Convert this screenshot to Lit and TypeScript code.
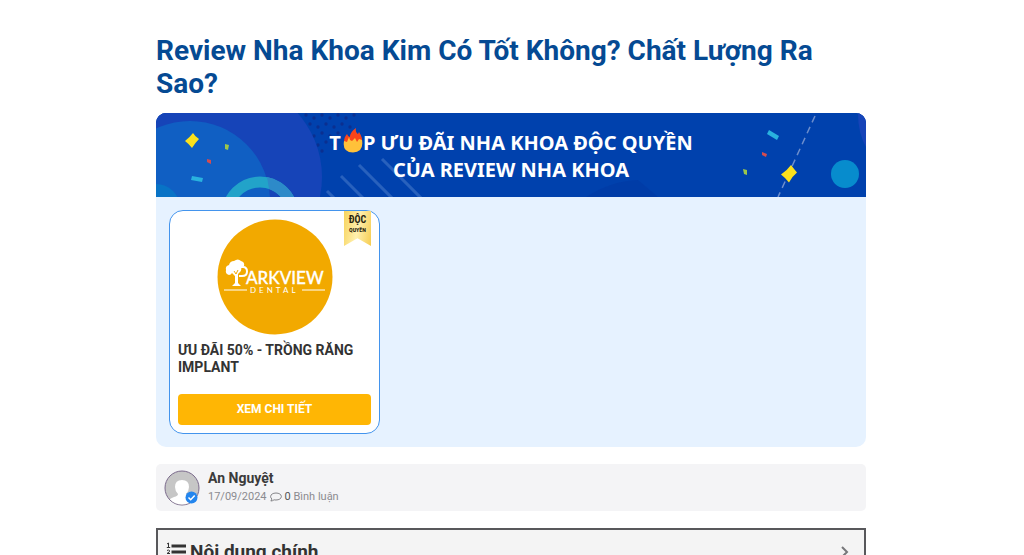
import { LitElement, html, css, svg } from "lit";
import { customElement } from "lit/decorators.js";

const dots: Array<[number, number]> = [];
for (let row = 0; row < 6; row++) {
  for (let col = 0; col < 7 - row; col++) {
    dots.push([150 + col * 8 + (row % 2) * 4, 2 + row * 9 + (col % 2) * 3]);
  }
}

@customElement("promo-banner")
class PromoBanner extends LitElement {
  static styles = css`
    :host {
      display: block;
    }
    .banner {
      position: relative;
      padding: 15px 16px 14px;
      background: #0041ad;
      overflow: hidden;
    }
    .art {
      position: absolute;
      inset: 0;
      width: 100%;
      height: 100%;
    }
    .heading {
      position: relative;
      margin: 0;
      color: #fff;
      text-align: center;
      font: 700 20px/27px "Noto Sans", "Open Sans", sans-serif;
    }
    .line {
      display: block;
    }
    .flame {
      width: 20px;
      height: 25px;
      margin-left: 2px;
      vertical-align: -3px;
    }
  `;

  render() {
    return html`
      <div class="banner">
        <svg class="art" viewBox="0 0 710 84" preserveAspectRatio="xMidYMid slice" aria-hidden="true">
          <rect width="710" height="84" fill="#0041ad" />
          <g fill="#0a2f90">
            ${dots.map(([x, y]) => svg`<circle cx=${x} cy=${y} r="1.7" />`)}
          </g>
          <circle cx="70" cy="64" r="96" fill="#1644b8" />
          <circle cx="34" cy="88" r="80" fill="#105fc3" />
          <circle cx="0" cy="95" r="24" fill="#0873c6" />
          <circle cx="104" cy="102" r="33" fill="none" stroke="#22a3c9" stroke-width="11" />
          <path d="M111 64.100A38.500 38.500 0 0 1 142.500 102H131.500A27.500 27.500 0 0 0 113 76z" fill="#2d8ac9" />
          <g stroke="#2861bd" stroke-width="3">
            <path d="M171 78l8 8M185 63l22 22M203 52l34 34M226 46l40 40" />
          </g>
          <path d="M430 84L502 84L482 67Q455 68 430 84Z" fill="#0039a4" opacity=".6" />
          <path d="M702 0h8v34q-8-14-8-34z" fill="#1644b8" />
          <path d="M659 3L622 84" stroke="#6b8dcc" stroke-width="1.5" stroke-dasharray="7 5" />
          <circle cx="689" cy="61" r="14" fill="#078ccd" />
          <g fill="#fbe11c">
            <path d="M37 20q2 3.500 6 6-4 4-7 9-3-4-7-7 5-4 8-8z" />
            <path d="M635 52q3 4 6 7.500-5 4-8 10-4-5-8-8 6-4 10-9.500z" />
          </g>
          <g fill="#29b2df">
            <path d="M36 63l11 2-1 4-11-2z" />
            <path d="M613 17l10 6-2 4-10-6z" />
          </g>
          <g fill="#9bc64b">
            <path d="M69 31l4 1-1 5-3-1z" />
            <path d="M587 56l4 1v5l-3-1z" />
          </g>
          <g fill="#d44c50">
            <path d="M51 46l4 1v4l-4-2z" />
            <path d="M606 39l5 2-1 3-4-2z" />
          </g>
        </svg>
        <h2 class="heading">
          <span class="line"
            >T<svg class="flame" viewBox="0 0 20 25" role="img" aria-label="O">
              <path d="M1 14Q1 9 4 6q1 3 3 3Q7 4 13 0q-1 4 2 6l1-2q4 6 3 11z" fill="#f8441b" />
              <path d="M1 13q-2 11 9 11.500Q21 24 19 12l-3-1-2 3-2-4-3 3-2-1-1-3-2 5z" fill="#ffc13a" /></svg
            >P ƯU ĐÃI NHA KHOA ĐỘC QUYỀN</span
          >
          <span class="line">CỦA REVIEW NHA KHOA</span>
        </h2>
      </div>
    `;
  }
}

@customElement("offer-card")
class OfferCard extends LitElement {
  static styles = css`
    :host {
      display: block;
    }
    .card {
      position: relative;
      display: flex;
      flex-direction: column;
      box-sizing: border-box;
      padding: 8px;
      border: 1px solid #4394ed;
      border-radius: 14px;
      background: #fff;
    }
    .logo {
      align-self: center;
      width: 116px;
      height: 116px;
    }
    .ribbon {
      position: absolute;
      top: 0;
      right: 8px;
      box-sizing: border-box;
      width: 27px;
      height: 35px;
      padding-top: 3px;
      text-align: center;
      color: #29230f;
      background: linear-gradient(100deg, #f7d35c, #fff0ae 50%, #f6cd51);
      clip-path: polygon(0 0, 100% 0, 100% 100%, 50% 78%, 0 100%);
      font-family: "Liberation Sans Narrow", "Roboto Condensed", Roboto, sans-serif;
      font-weight: 700;
    }
    .ribbon-top {
      display: block;
      font-size: 10px;
      line-height: 12px;
    }
    .ribbon-bottom {
      display: block;
      font-size: 6px;
      line-height: 8px;
    }
    .name {
      margin: 7px 0 18px;
      font-size: 14px;
      line-height: 17px;
      font-weight: 700;
      color: #333;
    }
    .more {
      height: 31px;
      padding: 0;
      border: 0;
      border-radius: 4px;
      background: #ffb604;
      color: #fff;
      font: 700 12px/31px Roboto, sans-serif;
      cursor: pointer;
    }
  `;

  render() {
    return html`
      <article class="card">
        <svg class="logo" viewBox="0 0 116 116" role="img" aria-label="Parkview Dental">
          <circle cx="58" cy="58" r="57.5" fill="#f2a900" />
          <path
            d="M12 56q-4-1-3-5-1-4 3-5 1-4 5-4 4-3 7 0 4 1 3 5h-3q1 4-1 6l-2 2v9l3 3h-9l3-3v-7l-3-3q-1 2-3 2z"
            fill="#fff"
          />
          <path d="M22 48h4q4 0 4 4.500t-5 4.500h-3" fill="none" stroke="#fff" stroke-width="2" />
          <path d="M17 52l2 3 2-4" fill="none" stroke="#f2a900" stroke-width="1" />
          <g fill="#fff" font-family="Lato, sans-serif">
            <text x="29" y="65" font-size="17" font-weight="500" stroke="#fff" stroke-width=".3">ARKVIEW</text>
            <text x="33" y="74" font-size="8" letter-spacing="3">DENTAL</text>
          </g>
          <path d="M7 71h23M85 71h23" stroke="#fff" stroke-width="1" />
        </svg>
        <div class="ribbon">
          <span class="ribbon-top">ĐỘC</span>
          <span class="ribbon-bottom">QUYỀN</span>
        </div>
        <h3 class="name">ƯU ĐÃI 50% - TRỒNG RĂNG IMPLANT</h3>
        <button class="more" type="button">XEM CHI TIẾT</button>
      </article>
    `;
  }
}

@customElement("author-bar")
class AuthorBar extends LitElement {
  static styles = css`
    :host {
      display: block;
    }
    .bar {
      display: flex;
      align-items: center;
      gap: 8px;
      padding: 5px 8px;
      border-radius: 5px;
      background: #f4f4f6;
    }
    .avatar {
      width: 36px;
      height: 36px;
    }
    .name {
      display: block;
      color: #3b3b3b;
      font-size: 14px;
      line-height: 19px;
      font-weight: 700;
      text-decoration: none;
    }
    .meta {
      display: flex;
      align-items: center;
      gap: 3px;
      color: #8b8b90;
      font-size: 11px;
      line-height: 18px;
    }
    .bubble {
      width: 12px;
      height: 10px;
    }
    .count {
      color: #555;
    }
  `;

  render() {
    return html`
      <div class="bar">
        <svg class="avatar" viewBox="0 0 36 36" role="img" aria-label="An Nguyệt">
          <defs>
            <clipPath id="round"><circle cx="18" cy="18" r="16.5" /></clipPath>
          </defs>
          <circle cx="18" cy="18" r="17" fill="#c6c6c6" stroke="#7b6a8c" />
          <g clip-path="url(#round)" fill="#fff">
            <path d="M11 17q0-7 7-7t7 7q0 4-3 7 0 2 4 3 6 2 7 6v4H3v-4q1-4 7-6 4-1 4-3-3-3-3-7z" />
          </g>
          <circle cx="27.500" cy="27.500" r="6" fill="#2385ee" />
          <path d="M24.500 27.500l2.200 2.200 4-4.200" fill="none" stroke="#fff" stroke-width="1.500" />
        </svg>
        <div>
          <a class="name" href="#author">An Nguyệt</a>
          <div class="meta">
            <time datetime="2024-09-17">17/09/2024</time>
            <svg class="bubble" viewBox="0 0 12 10" aria-hidden="true">
              <path
                d="M6 1c3 0 5.400 1.500 5.400 3.500S9 8 6 8c-.7 0-1.300 0-1.900-.2C3 8.600 2 9 .8 9c.6-.6 1-1.200 1.100-2C1.100 6.400.6 5.500.6 4.500.6 2.500 3 1 6 1z"
                fill="none"
                stroke="#77777c"
                stroke-width=".9"
              />
            </svg>
            <span><span class="count">0</span> Bình luận</span>
          </div>
        </div>
      </div>
    `;
  }
}

@customElement("app-root")
class AppRoot extends LitElement {
  static styles = css`
    :host {
      display: block;
      padding: 34px 16px 0 14px;
      background: #fff;
      color: #333;
      font-family: Roboto, sans-serif;
    }
    .page {
      max-width: 710px;
      margin: 0 auto;
    }
    .title {
      margin: 0 0 13px;
      color: #054a93;
      font-size: 28px;
      line-height: 33px;
      font-weight: 700;
    }
    .offers {
      margin-bottom: 17px;
      border-radius: 10px;
      background: #e6f2ff;
      overflow: hidden;
    }
    .grid {
      display: grid;
      grid-template-columns: repeat(auto-fill, 211px);
      gap: 13px;
      padding: 13px;
    }
    .toc {
      display: flex;
      align-items: center;
      gap: 4px;
      margin-top: 17px;
      padding: 8px 14px 8px 8px;
      border: 2px solid #58585b;
      background: #f4f4f4;
    }
    .toc-title {
      flex: 1;
      margin: 0;
      font-size: 19px;
      line-height: 28px;
      font-weight: 700;
      color: #333;
    }
    .list {
      width: 20px;
      height: 20px;
    }
    .toggle {
      display: flex;
      padding: 0;
      border: 0;
      background: none;
      cursor: pointer;
    }
    .chevron {
      width: 10px;
      height: 14px;
    }
  `;

  render() {
    return html`
      <main class="page">
        <h1 class="title">Review Nha Khoa Kim Có Tốt Không? Chất Lượng Ra Sao?</h1>
        <section class="offers">
          <promo-banner></promo-banner>
          <div class="grid">
            <offer-card></offer-card>
          </div>
        </section>
        <author-bar></author-bar>
        <nav class="toc" aria-label="Nội dung chính">
          <svg class="list" viewBox="0 0 20 20" aria-hidden="true">
            <path d="M5.500 4h14.500M5.500 10h14.500M5.500 16h14.500" stroke="#333" stroke-width="2.800" />
            <path d="M1 2l1.500-1v4.500M.8 5.500h3.400M1 8.500q1.500-1 2.500 0t-2.500 3h3M1 14.500h3l-1.500 1.700q2 .2 1.500 1.800t-3 .8" fill="none" stroke="#333" />
          </svg>
          <h2 class="toc-title">Nội dung chính</h2>
          <button class="toggle" type="button" aria-label="Mở mục lục">
            <svg class="chevron" viewBox="0 0 10 14" aria-hidden="true">
              <path d="M2 2l5 5-5 5" fill="none" stroke="#77777a" stroke-width="2" />
            </svg>
          </button>
        </nav>
      </main>
    `;
  }
}
